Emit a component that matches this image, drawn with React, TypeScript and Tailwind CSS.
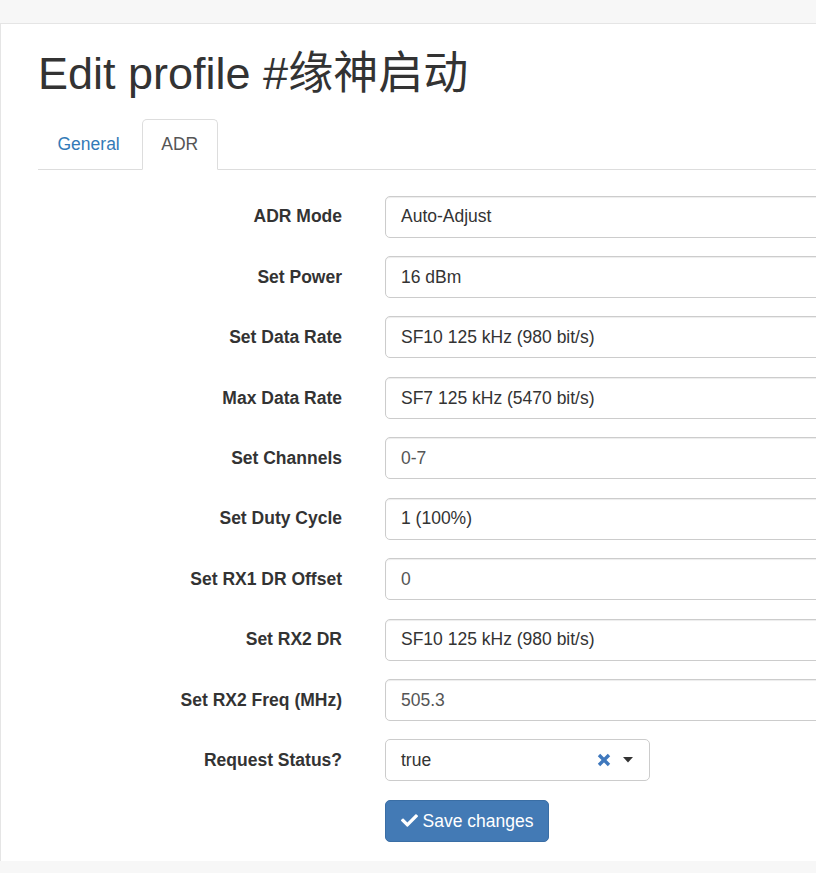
import { FaCheck } from 'react-icons/fa';

type Field = { label: string; value: string; kind: 'select' | 'input' };

const FIELDS: Field[] = [
  { label: 'ADR Mode', value: 'Auto-Adjust', kind: 'select' },
  { label: 'Set Power', value: '16 dBm', kind: 'select' },
  { label: 'Set Data Rate', value: 'SF10 125 kHz (980 bit/s)', kind: 'select' },
  { label: 'Max Data Rate', value: 'SF7 125 kHz (5470 bit/s)', kind: 'select' },
  { label: 'Set Channels', value: '0-7', kind: 'input' },
  { label: 'Set Duty Cycle', value: '1 (100%)', kind: 'select' },
  { label: 'Set RX1 DR Offset', value: '0', kind: 'input' },
  { label: 'Set RX2 DR', value: 'SF10 125 kHz (980 bit/s)', kind: 'select' },
  { label: 'Set RX2 Freq (MHz)', value: '505.3', kind: 'input' },
];

function FormRow({ label, children }: { label: string; children: React.ReactNode }) {
  return (
    <div className="flex items-center mb-[18.44px]">
      <label className="w-[304px] text-right font-bold text-[#333]">{label}</label>
      <div className="ml-[43px] flex-1">{children}</div>
    </div>
  );
}

export default function App() {
  return (
    <div
      className="min-h-screen w-full overflow-hidden bg-[#f7f7f7] pt-[23px] pb-[13px] text-[17.5px] leading-[1.41]"
      style={{ fontFamily: '"Liberation Sans", Arial, "Noto Sans CJK SC", sans-serif' }}
    >
      <div className="w-[1100px] border-t border-l border-[#e5e5e5] bg-white pl-[37px] pt-[26px] pb-[19px]">
        {/* Header */}
        <h1 className="text-[45px] leading-[1.08] font-normal text-[#333]">Edit profile #缘神启动</h1>

        {/* Tabs */}
        <div className="mt-[20px] flex border-b border-[#ddd]">
          <div className="mr-[2.5px] -mb-px px-[18.5px] py-[12.3px] border border-transparent text-[#337ab7]">General</div>
          <div className="-mb-px px-[18.5px] py-[12.3px] rounded-t-[5px] border border-[#ddd] border-b-white bg-white text-[#555]">
            ADR
          </div>
        </div>

        {/* Form */}
        <div className="pt-[25.7px]">
          {FIELDS.map((f) => (
            <FormRow key={f.label} label={f.label}>
              <div
                className={`h-[42px] flex items-center px-[15px] border border-[#ccc] rounded-[5px] bg-white shadow-[inset_0_1px_1px_rgba(0,0,0,0.075)] ${
                  f.kind === 'input' ? 'text-[#555]' : 'text-[#333]'
                }`}
              >
                {f.value}
              </div>
            </FormRow>
          ))}

          <FormRow label="Request Status?">
            <div className="w-[265px] h-[42px] flex items-center px-[15px] border border-[#ccc] rounded-[5px] bg-white text-[#333]">
              <span className="flex-1">true</span>
              <svg width="14" height="14" viewBox="0 0 14 14" className="mr-[12px]">
                <path d="M2 2 L12 12 M12 2 L2 12" stroke="#3f78bd" strokeWidth="3.4" strokeLinecap="butt" />
              </svg>
              <svg width="10" height="6" viewBox="0 0 10 6" className="mr-[1px]">
                <path d="M0 0 L10 0 L5 5.5 Z" fill="#333" />
              </svg>
            </div>
          </FormRow>

          <div className="ml-[347px]">
            <button className="h-[42px] w-[164px] flex items-center justify-center gap-[5px] rounded-[5px] border border-[#3a6ea5] bg-[#437ab5] text-white">
              <FaCheck size={17} />
              Save changes
            </button>
          </div>
        </div>
      </div>
    </div>
  );
}
